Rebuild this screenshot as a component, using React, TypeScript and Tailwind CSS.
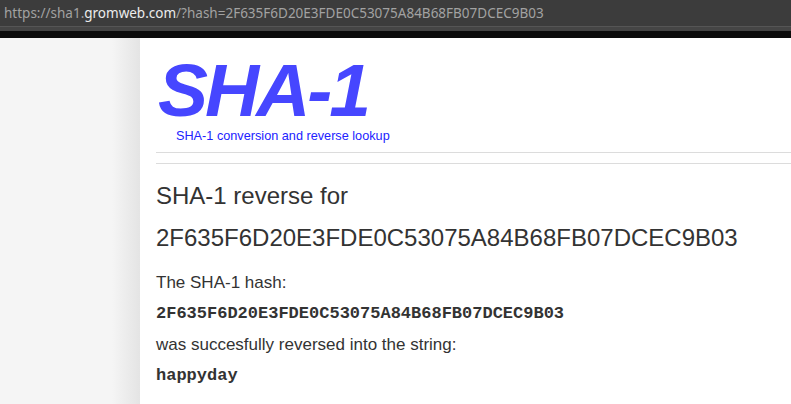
export default function App() {
  return (
    <div className="w-[791px] h-[404px] overflow-hidden flex flex-col bg-white">
      {/* address bar */}
      <div className="h-[26px] bg-[#3c3c3c] flex items-center pl-[4px] text-[13.5px] text-[#a2a2a2] whitespace-nowrap" style={{ fontFamily: '"Noto Sans", "Open Sans", sans-serif' }}>
        <span>https://sha1.</span>
        <span className="text-[#ececec]">gromweb.com</span>
        <span>/?hash=2F635F6D20E3FDE0C53075A84B68FB07DCEC9B03</span>
      </div>
      <div className="h-[5px] bg-[#454545] border-t border-[#555]" />
      <div className="h-[7px] bg-[#0c0c0c]" />
      <div className="flex flex-1 min-h-0">
        <div className="w-[140px] bg-[linear-gradient(to_right,#f5f5f5_80%,#e4e4e4)]" />
        <div className="flex-1 bg-white flex flex-col" style={{ fontFamily: '"Liberation Sans", Arial, sans-serif' }}>
          <div className="pl-[18px] pt-[18px]">
            <div className="text-[75px] leading-[68px] font-bold italic text-[#4646ff] tracking-[-3px]">SHA-1</div>
          </div>
          <div className="mt-[5px] pl-[36px] text-[12.7px] leading-[14px] text-[#2222ff]">SHA-1 conversion and reverse lookup</div>
          <div className="ml-[16px] mt-[9px] border-t border-[#dcdcdc]" />
          <div className="ml-[16px] mt-[10px] border-t border-[#dcdcdc]" />
          <div className="pl-[16px] text-[#333]">
            <div className="mt-[17px] text-[24px] leading-[30px]">SHA-1 reverse for</div>
            <div className="mt-[12px] text-[24px] leading-[30px]">2F635F6D20E3FDE0C53075A84B68FB07DCEC9B03</div>
            <div className="mt-[15px] text-[17px] leading-[30px]">The SHA-1 hash:</div>
            <div className="text-[17px] leading-[31px] font-bold" style={{ fontFamily: '"Liberation Mono", "Courier New", monospace' }}>2F635F6D20E3FDE0C53075A84B68FB07DCEC9B03</div>
            <div className="text-[17px] leading-[31px]">was succesfully reversed into the string:</div>
            <div className="text-[17px] leading-[31px] font-bold" style={{ fontFamily: '"Liberation Mono", "Courier New", monospace' }}>happyday</div>
          </div>
        </div>
      </div>
    </div>
  );
}
